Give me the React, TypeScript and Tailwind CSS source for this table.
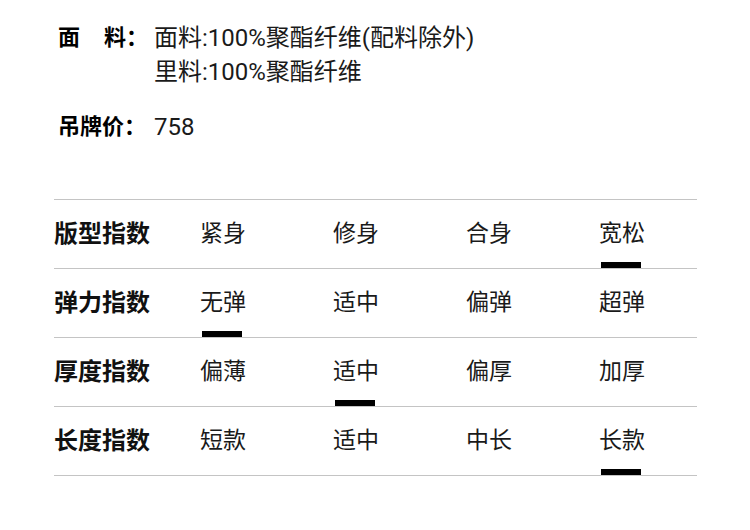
const rows = [
  { label: "版型指数", options: ["紧身", "修身", "合身", "宽松"], active: 3 },
  { label: "弹力指数", options: ["无弹", "适中", "偏弹", "超弹"], active: 0 },
  { label: "厚度指数", options: ["偏薄", "适中", "偏厚", "加厚"], active: 1 },
  { label: "长度指数", options: ["短款", "适中", "中长", "长款"], active: 3 },
];

const font = {
  fontFamily: '"Roboto", "Noto Sans CJK SC", sans-serif',
};

const App = () => (
  <div className="h-[530px] w-[750px] bg-white text-[#1a1a1a]" style={font}>
    {/* Material & price */}
    <div className="pl-[58px] pt-[21px]">
      <div className="flex">
        <div className="flex w-[90px] justify-between text-[22px] font-bold leading-[34px] text-black">
          <span>面</span>
          <span>料：</span>
        </div>
        <div className="ml-[6px] text-[24px] leading-[34px]">
          <p>面料:100%聚酯纤维(配料除外)</p>
          <p>里料:100%聚酯纤维</p>
        </div>
      </div>
      <div className="mt-[21px] flex">
        <div className="w-[90px] text-[22px] font-bold leading-[34px] text-black">吊牌价：</div>
        <div className="ml-[6px] text-[24px] leading-[34px]">758</div>
      </div>
    </div>

    {/* Index table */}
    <div className="ml-[54px] mt-[55px] w-[643px] border-t border-[#c4c4c4]">
      {rows.map((row) => (
        <div
          key={row.label}
          className="grid h-[69px] grid-cols-[146px_133px_133px_133px_1fr] border-b border-[#c4c4c4]"
        >
          <div className="flex items-center text-[24px] font-bold text-[#111]">{row.label}</div>
          {row.options.map((opt, i) => (
            <div key={opt + i} className="relative flex items-center text-[23px]">
              {opt}
              {i === row.active && (
                <span className="absolute bottom-0 left-[2px] h-[6px] w-[40px] bg-black" />
              )}
            </div>
          ))}
        </div>
      ))}
    </div>
  </div>
);

export default App;
